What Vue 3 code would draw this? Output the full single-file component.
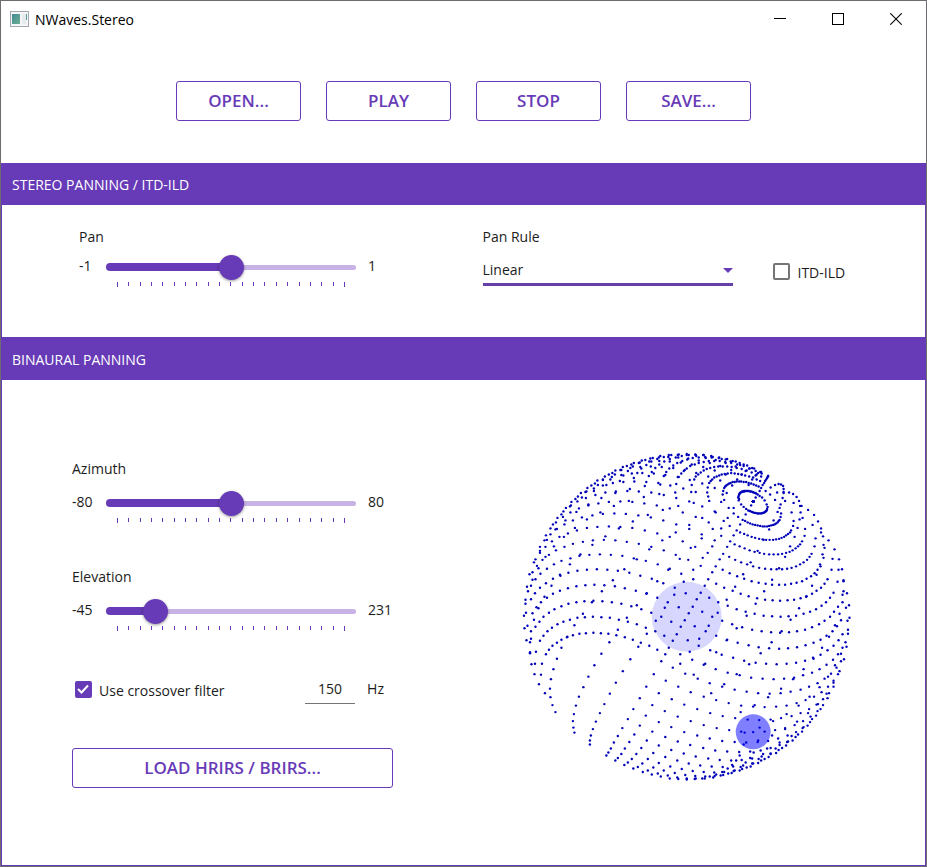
<script setup>
import { computed, reactive, ref } from 'vue'

const actions = ['OPEN...', 'PLAY', 'STOP', 'SAVE...']
const rules = ['Linear', 'Constant power', 'Balanced', 'Sin3Db']
const rule = ref('Linear')
const itdIld = ref(false)
const crossover = ref(true)
const frequency = ref('150')

const pan = reactive({ id: 'pan', label: 'Pan', min: -1, max: 1, step: 0.01, value: 0 })
const azimuth = reactive({ id: 'azimuth', label: 'Azimuth', min: -80, max: 80, step: 1, value: 0 })
const elevation = reactive({ id: 'elevation', label: 'Elevation', min: -45, max: 231, step: 1, value: 0 })

const share = (s) => ((s.value - s.min) / (s.max - s.min)) * 100

// Isometric projection of the sphere, centred on 0,0
const R = 163
const rad = Math.PI / 180
function project(az, el) {
  const front = Math.cos(el * rad) * Math.cos(az * rad)
  const side = Math.cos(el * rad) * Math.sin(az * rad)
  const up = Math.sin(el * rad)
  return {
    x: R * ((front + up) / Math.sqrt(6) - side * Math.sqrt(2 / 3)),
    y: R * ((front - up) / Math.sqrt(2)),
  }
}

const azimuths = [-80, -65, -55]
for (let a = -45; a <= 45; a += 5) azimuths.push(a)
azimuths.push(55, 65, 80)

const half = (n) => Math.round(n * 2) / 2
const dots = []
for (const a of azimuths) {
  for (let i = 0; i < 50; i++) {
    const p = project(a, -45 + 5.625 * i)
    dots.push({ x: half(p.x), y: half(p.y) })
  }
}
const source = computed(() => project(Number(azimuth.value), Number(elevation.value)))
</script>

<template>
  <div class="window">
    <header class="titlebar">
      <svg class="app-icon" width="19" height="16" viewBox="0 0 19 16" aria-hidden="true">
        <defs>
          <linearGradient id="pane" x1="0" y1="0" x2="1" y2="1">
            <stop offset="0" stop-color="#3f8a96" />
            <stop offset="1" stop-color="#6fae92" />
          </linearGradient>
        </defs>
        <rect x="0.5" y="0.5" width="18" height="15" fill="#f4f6f7" stroke="#a3a9ae" />
        <rect x="2" y="3" width="8" height="10" fill="url(#pane)" />
        <rect x="12" y="3" width="4" height="10" fill="#e6ebee" />
        <rect x="16" y="3" width="1" height="6" fill="#5a9a9a" />
      </svg>
      <h1>NWaves.Stereo</h1>
      <div class="controls">
        <button type="button" aria-label="Minimize">
          <svg width="12" height="12" viewBox="0 0 12 12"><path d="M0 5.500h12" stroke="#000" /></svg>
        </button>
        <button type="button" aria-label="Maximize">
          <svg width="12" height="12" viewBox="0 0 12 12"><rect x="0.5" y="0.5" width="11" height="11" fill="none" stroke="#000" /></svg>
        </button>
        <button type="button" aria-label="Close">
          <svg width="12" height="12" viewBox="0 0 12 12"><path d="M0.300 0.300l11.400 11.400M11.700 0.300l-11.400 11.400" stroke="#000" stroke-width="1.100" /></svg>
        </button>
      </div>
    </header>

    <nav class="toolbar">
      <button v-for="a in actions" :key="a" type="button" class="outlined">{{ a }}</button>
    </nav>

    <section class="group">
      <h2>STEREO PANNING / ITD-ILD</h2>
      <div class="body stereo">
        <div class="field pan">
          <label :for="pan.id">{{ pan.label }}</label>
          <div class="slider-row">
            <span>{{ pan.min }}</span>
            <div class="slider">
              <div class="rail"></div>
              <div class="fill" :style="{ width: share(pan) + '%' }"></div>
              <input :id="pan.id" v-model="pan.value" type="range" :min="pan.min" :max="pan.max" :step="pan.step" />
            </div>
            <span>{{ pan.max }}</span>
            <div class="ticks"><i v-for="n in 21" :key="n"></i></div>
          </div>
        </div>
        <div class="rule-area">
          <div class="rule">
            <label for="rule">Pan Rule</label>
            <div class="select">
              <select id="rule" v-model="rule">
                <option v-for="r in rules" :key="r">{{ r }}</option>
              </select>
              <svg width="10" height="5" viewBox="0 0 10 5" aria-hidden="true"><path d="M0 0h10l-5 5z" fill="#673ab7" /></svg>
            </div>
          </div>
          <label class="check itd">
            <span class="box">
              <input v-model="itdIld" type="checkbox" />
              <svg v-if="itdIld" width="12" height="10" viewBox="0 0 12 10"><path d="M1 5l3.500 3.500 6.500-7" fill="none" stroke="#fff" stroke-width="2" /></svg>
            </span>
            <span>ITD-ILD</span>
          </label>
        </div>
      </div>
    </section>

    <section class="group grow">
      <h2 class="tall">BINAURAL PANNING</h2>
      <div class="body binaural">
        <div class="settings">
          <div v-for="s in [azimuth, elevation]" :key="s.id" class="field angle">
            <label :for="s.id">{{ s.label }}</label>
            <div class="slider-row">
              <span>{{ s.min }}</span>
              <div class="slider">
                <div class="rail"></div>
                <div class="fill" :style="{ width: share(s) + '%' }"></div>
                <input :id="s.id" v-model="s.value" type="range" :min="s.min" :max="s.max" :step="s.step" />
              </div>
              <span>{{ s.max }}</span>
              <div class="ticks"><i v-for="n in 21" :key="n"></i></div>
            </div>
          </div>
          <div class="filter">
            <label class="check">
              <span class="box">
                <input v-model="crossover" type="checkbox" />
                <svg v-if="crossover" width="12" height="10" viewBox="0 0 12 10"><path d="M1 5l3.500 3.500 6.500-7" fill="none" stroke="#fff" stroke-width="2" /></svg>
              </span>
              <span>Use crossover filter</span>
            </label>
            <label class="freq">
              <input v-model="frequency" type="text" inputmode="numeric" />
              <span>Hz</span>
            </label>
          </div>
          <button type="button" class="outlined">LOAD HRIRS / BRIRS...</button>
        </div>
        <div class="scene">
          <svg viewBox="-166 -166 332 332" role="img" aria-label="HRIR positions">
            <circle v-for="(d, i) in dots" :key="i" :cx="d.x" :cy="d.y" r="1.200" fill="#0000b8" />
            <circle r="35" fill="#0000ff" fill-opacity="0.160" />
            <circle :cx="source.x" :cy="source.y" r="17.500" fill="#0000ff" fill-opacity="0.500" />
          </svg>
        </div>
      </div>
    </section>
  </div>
</template>

<style>
body {
  margin: 0;
}
</style>

<style scoped>
* {
  box-sizing: border-box;
}
.window {
  --accent: #673ab7;
  display: flex;
  flex-direction: column;
  min-height: 100vh;
  border: 1px solid #6e6c70;
  background: #fff;
  color: #1c1c1c;
  font: 14px/20px 'Open Sans', 'Noto Sans', sans-serif;
}
button,
input,
select {
  margin: 0;
  font: inherit;
  color: inherit;
}
.titlebar {
  display: flex;
  align-items: center;
  height: 38px;
  padding: 0 1px 0 9px;
}
.app-icon {
  margin-bottom: 2px;
}
.titlebar h1 {
  flex: 1;
  margin: 0 0 0 6px;
  color: #000;
  font-size: 14px;
  font-weight: 400;
}
.controls {
  display: flex;
  align-self: flex-start;
}
.controls button {
  display: grid;
  place-items: center;
  width: 58px;
  height: 36px;
  padding: 0;
  border: 0;
  background: none;
}
.toolbar {
  display: flex;
  justify-content: center;
  gap: 25px;
  padding: 42px 0;
}
.toolbar .outlined {
  width: 125px;
}
.outlined {
  height: 40px;
  padding: 0;
  border: 1px solid var(--accent);
  border-radius: 3px;
  background: #fff;
  color: var(--accent);
  font-size: 17px;
  font-weight: 600;
}
.group {
  display: flex;
  flex-direction: column;
}
.grow {
  flex: 1;
}
.group h2 {
  margin: 0;
  padding: 12px 11px 10px;
  background: var(--accent);
  color: #fff;
  font-size: 14px;
  font-weight: 400;
}
.group .tall {
  padding: 13px 11px 10px;
}
.body {
  display: grid;
  grid-template-columns: 1fr 1fr;
  flex: 1;
  border: 1px solid var(--accent);
  border-top: 0;
}
.stereo {
  padding-top: 22px;
  min-height: 132px;
  border-bottom: 0;
}
.field {
  display: flex;
  flex-direction: column;
}
.pan {
  gap: 7px;
  padding-left: 77px;
}
.slider-row {
  display: grid;
  grid-template-columns: 27px minmax(100px, 250px) auto;
  align-items: center;
  justify-content: start;
  row-gap: 2px;
}
.angle .slider-row {
  grid-template-columns: 34px minmax(100px, 250px) auto;
}
.slider-row > span {
  padding-bottom: 2px;
}
.slider-row > span:nth-of-type(2) {
  padding-left: 12px;
}
.slider {
  display: grid;
  align-items: center;
  height: 26px;
}
.slider > * {
  grid-area: 1 / 1;
}
.rail {
  height: 5px;
  border-radius: 3px;
  background: #c7b3e5;
}
.fill {
  height: 8px;
  border-radius: 4px;
  background: var(--accent);
}
.slider input {
  width: 100%;
  height: 26px;
  appearance: none;
  background: none;
}
.slider input::-webkit-slider-thumb {
  width: 25px;
  height: 25px;
  appearance: none;
  border: 0;
  border-radius: 50%;
  background: var(--accent);
  box-shadow: 0 1px 3px rgba(0, 0, 0, 0.4);
}
.ticks {
  grid-column: 2;
  display: flex;
  justify-content: space-between;
  padding: 0 11px;
}
.ticks i {
  width: 1px;
  height: 4px;
  background: #673ab7;
}
.ticks i:first-child,
.ticks i:last-child {
  height: 5px;
}
.rule-area {
  display: flex;
  align-items: flex-start;
  gap: 40px;
  padding-left: 19px;
}
.rule {
  display: flex;
  flex-direction: column;
  flex: 0 1 250px;
  gap: 10px;
}
.select {
  display: grid;
  align-items: center;
  border-bottom: 3px solid #6540a8;
}
.select > * {
  grid-area: 1 / 1;
}
.select select {
  width: 100%;
  height: 26px;
  padding: 0;
  border: 0;
  border-radius: 0;
  appearance: none;
  background: none;
}
.select svg {
  justify-self: end;
}
.check {
  display: flex;
  gap: 7px;
}
.itd {
  padding-top: 35px;
}
.box {
  display: grid;
  place-items: center;
  width: 18px;
  height: 18px;
}
.check > span:last-child {
  padding-top: 1px;
}
.box > * {
  grid-area: 1 / 1;
}
.box input {
  width: 17px;
  height: 17px;
  appearance: none;
  border: 2px solid #757575;
  border-radius: 2px;
}
.box input:checked {
  border-color: var(--accent);
  background: var(--accent);
}
.box svg {
  pointer-events: none;
}
.settings {
  display: flex;
  flex-direction: column;
  align-items: stretch;
  padding: 79px 0 76px 70px;
}
.angle {
  gap: 11px;
  min-height: 108px;
}
.filter {
  display: flex;
  align-items: flex-start;
  justify-content: space-between;
  width: 100%;
  max-width: 312px;
  margin-top: 4px;
  padding-left: 2px;
}
.filter .check {
  padding-top: 1px;
}
.freq {
  display: flex;
  gap: 12px;
}
.freq input {
  width: 50px;
  height: 25px;
  padding: 0 0 5px;
  border: 0;
  border-bottom: 1px solid #757575;
  background: none;
  text-align: center;
}
.settings .outlined {
  width: 100%;
  max-width: 321px;
  margin-top: 44px;
}
.scene {
  padding: 71px 73px 0 57px;
}
.scene svg {
  display: block;
  width: 100%;
  max-width: 332px;
}
</style>
